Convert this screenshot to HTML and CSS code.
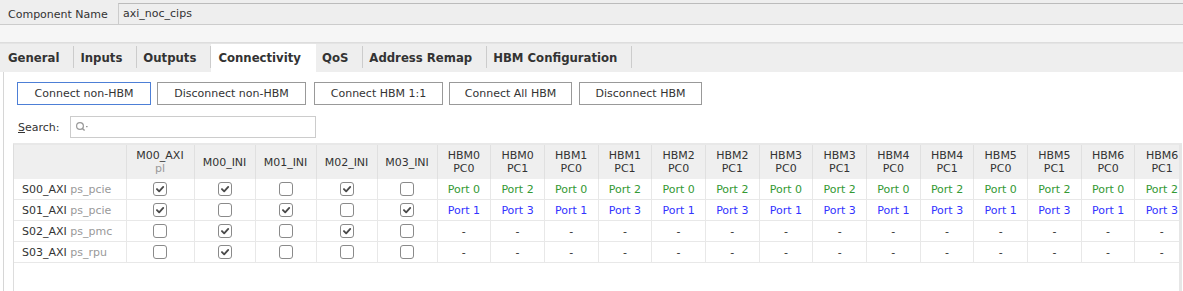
FILE: index.html
```html
<!DOCTYPE html>
<html lang="en">
  <head>
    <title>axi_noc_cips - Connectivity</title>
    <link rel="stylesheet" href="styles.css">
  </head>
  <body>
    <svg width="0" height="0" class="defs">
      <symbol id="tick" viewBox="0 0 13 13">
        <path d="M3.2 6.6 L5.6 9 L10 4.2" fill="none" stroke="#4a4a4a" stroke-width="2" stroke-linecap="round" stroke-linejoin="round"/>
      </symbol>
    </svg>

    <div class="name-bar">
      <label>Component Name</label>
      <div class="name-field">axi_noc_cips</div>
    </div>
    <div class="band"></div>

    <div class="tabs">
      <div class="tab">General</div>
      <div class="tab">Inputs</div>
      <div class="tab">Outputs</div>
      <div class="tab active">Connectivity</div>
      <div class="tab">QoS</div>
      <div class="tab">Address Remap</div>
      <div class="tab">HBM Configuration</div>
    </div>

    <div class="panel">
      <div class="actions">
        <button class="focused">Connect non-HBM</button>
        <button>Disconnect non-HBM</button>
        <button>Connect HBM 1:1</button>
        <button>Connect All HBM</button>
        <button>Disconnect HBM</button>
      </div>

      <div class="search">
        <span class="search-label"><u>S</u>earch:</span>
        <div class="search-field">
          <svg width="14" height="12" viewBox="0 0 14 12">
            <circle cx="5" cy="5" r="3.4" fill="none" stroke="#999" stroke-width="1.2"/>
            <path d="M7.4 7.4 L9.6 9.6" stroke="#999" stroke-width="1.4"/>
            <rect x="11" y="5" width="1.6" height="1.2" fill="#999"/>
          </svg>
        </div>
      </div>

      <div class="grid-wrap">
        <table class="grid">
          <colgroup>
            <col class="c-name"><col class="c-axi"><col class="c-ini"><col class="c-ini"><col class="c-ini"><col class="c-ini3">
            <col class="c-hbm"><col class="c-hbm"><col class="c-hbm"><col class="c-hbm"><col class="c-hbm"><col class="c-hbm"><col class="c-hbm">
            <col class="c-hbm"><col class="c-hbm"><col class="c-hbm"><col class="c-hbm"><col class="c-hbm"><col class="c-hbm"><col class="c-hbm">
          </colgroup>
          <thead>
            <tr>
              <th></th>
              <th>M00_AXI<br><span class="dim">pl</span></th>
              <th>M00_INI</th><th>M01_INI</th><th>M02_INI</th><th>M03_INI</th>
              <th>HBM0<br>PC0</th><th>HBM0<br>PC1</th><th>HBM1<br>PC0</th><th>HBM1<br>PC1</th>
              <th>HBM2<br>PC0</th><th>HBM2<br>PC1</th><th>HBM3<br>PC0</th><th>HBM3<br>PC1</th>
              <th>HBM4<br>PC0</th><th>HBM4<br>PC1</th><th>HBM5<br>PC0</th><th>HBM5<br>PC1</th>
              <th>HBM6<br>PC0</th><th>HBM6<br>PC1</th>
            </tr>
          </thead>
          <tbody>
            <tr>
              <td class="name">S00_AXI <span class="dim">ps_pcie</span></td>
              <td><span class="cb"><svg><use href="#tick"/></svg></span></td>
              <td><span class="cb"><svg><use href="#tick"/></svg></span></td>
              <td><span class="cb"></span></td>
              <td><span class="cb"><svg><use href="#tick"/></svg></span></td>
              <td><span class="cb"></span></td>
              <td class="p0">Port 0</td><td class="p0">Port 2</td><td class="p0">Port 0</td><td class="p0">Port 2</td>
              <td class="p0">Port 0</td><td class="p0">Port 2</td><td class="p0">Port 0</td><td class="p0">Port 2</td>
              <td class="p0">Port 0</td><td class="p0">Port 2</td><td class="p0">Port 0</td><td class="p0">Port 2</td>
              <td class="p0">Port 0</td><td class="p0">Port 2</td>
            </tr>
            <tr>
              <td class="name">S01_AXI <span class="dim">ps_pcie</span></td>
              <td><span class="cb"><svg><use href="#tick"/></svg></span></td>
              <td><span class="cb"></span></td>
              <td><span class="cb"><svg><use href="#tick"/></svg></span></td>
              <td><span class="cb"></span></td>
              <td><span class="cb"><svg><use href="#tick"/></svg></span></td>
              <td class="p1">Port 1</td><td class="p1">Port 3</td><td class="p1">Port 1</td><td class="p1">Port 3</td>
              <td class="p1">Port 1</td><td class="p1">Port 3</td><td class="p1">Port 1</td><td class="p1">Port 3</td>
              <td class="p1">Port 1</td><td class="p1">Port 3</td><td class="p1">Port 1</td><td class="p1">Port 3</td>
              <td class="p1">Port 1</td><td class="p1">Port 3</td>
            </tr>
            <tr>
              <td class="name">S02_AXI <span class="dim">ps_pmc</span></td>
              <td><span class="cb"></span></td>
              <td><span class="cb"><svg><use href="#tick"/></svg></span></td>
              <td><span class="cb"></span></td>
              <td><span class="cb"><svg><use href="#tick"/></svg></span></td>
              <td><span class="cb"></span></td>
              <td>-</td><td>-</td><td>-</td><td>-</td><td>-</td><td>-</td><td>-</td>
              <td>-</td><td>-</td><td>-</td><td>-</td><td>-</td><td>-</td><td>-</td>
            </tr>
            <tr>
              <td class="name">S03_AXI <span class="dim">ps_rpu</span></td>
              <td><span class="cb"></span></td>
              <td><span class="cb"><svg><use href="#tick"/></svg></span></td>
              <td><span class="cb"></span></td>
              <td><span class="cb"></span></td>
              <td><span class="cb"></span></td>
              <td>-</td><td>-</td><td>-</td><td>-</td><td>-</td><td>-</td><td>-</td>
              <td>-</td><td>-</td><td>-</td><td>-</td><td>-</td><td>-</td><td>-</td>
            </tr>
          </tbody>
        </table>
      </div>
    </div>
  </body>
</html>
```

FILE: styles.css
```css
body {
  margin: 0;
  font-family: "DejaVu Sans", sans-serif;
  font-size: 11px;
  color: #333;
  background: #fff;
  overflow: hidden;
}
.defs {
  position: absolute;
}
.name-bar {
  height: 21px;
  display: flex;
  background: #eee;
  padding: 3px 0 0 8px;
}
.name-bar label {
  width: 110px;
  line-height: 23px;
}
.name-field {
  flex-grow: 1;
  line-height: 20px;
  padding-left: 4px;
  border-top: 1px solid #bbb;
  border-left: 1px solid #ccc;
  background: #eee;
}
.band {
  height: 17px;
  background: #f6f6f6;
  border-top: 1px solid #ccc;
  border-bottom: 1px solid #ddd;
  box-shadow: 0 1px 1px #e4e4e4;
}
.tabs {
  display: flex;
  height: 28px;
  margin-top: 1px;
  background: #eee;
  padding-left: 1px;
}
.tab {
  display: flex;
  align-items: center;
  padding: 0 15px 0 6px;
  font-size: 11.7px;
  font-weight: bold;
  color: #333;
  position: relative;
}
.tab:first-child {
  padding-left: 7px;
}
.tab::after {
  content: "";
  position: absolute;
  right: 0;
  top: 2px;
  bottom: 4px;
  border-right: 1px solid #ccc;
}
.tab.active {
  background: #fff;
  padding: 0 15px 0 7px;
}
.tab.active::after {
  display: none;
}
.panel {
  margin-left: 3px;
  border-left: 1px solid #d6d6d6;
  height: 230px;
}
.actions {
  display: flex;
  padding: 10px 0 0 13px;
}
.actions button {
  height: 23px;
  padding: 0;
  margin-right: 7px;
  border: 1px solid #999;
  border-radius: 0;
  background: #fff;
  font-family: "DejaVu Sans", sans-serif;
  font-size: 11px;
  color: #333;
}
.actions button:nth-child(1) { width: 134px; margin-right: 6px; }
.actions button:nth-child(2) { width: 149px; margin-right: 8px; }
.actions button:nth-child(3) { width: 129px; margin-right: 6px; }
.actions button:nth-child(4) { width: 123px; }
.actions button:nth-child(5) { width: 123px; }
.actions button.focused {
  border-color: #4d7fd6;
}
.search {
  display: flex;
  align-items: center;
  padding: 11px 0 0 14px;
}
.search-label {
  width: 52px;
}
.search-field {
  width: 240px;
  height: 20px;
  border: 1px solid #ccc;
  display: flex;
  align-items: center;
  padding-left: 4px;
}
.grid-wrap {
  margin: 5px 0 0 9px;
  width: 1165px;
  height: 160px;
  overflow: hidden;
  border-top: 2px solid #e8e8e8;
  border-left: 1px solid #ddd;
  border-right: 3px solid #e6e6e6;
}
.grid {
  table-layout: fixed;
  border-collapse: collapse;
  width: 1175px;
}
.c-name { width: 112px; }
.c-axi { width: 68px; }
.c-ini { width: 61px; }
.c-ini3 { width: 60px; }
.c-hbm { width: 53.7px; }
.grid th {
  height: 34px;
  padding: 0;
  background: #efefef;
  font-weight: normal;
  line-height: 13px;
  border-left: 1px solid #e0e0e0;
  white-space: nowrap;
  overflow: hidden;
}
.grid th:first-child {
  border-left: none;
}
.grid td {
  height: 20px;
  padding: 0;
  text-align: center;
  white-space: nowrap;
  overflow: hidden;
  border: 1px solid #e8e8e8;
  border-top: none;
}
.grid td:first-child {
  border-left: none;
}
.grid td.name {
  text-align: left;
  padding-left: 8px;
}
.dim {
  color: #999;
}
.p0 {
  color: #339933;
}
.p1 {
  color: #3333ff;
}
.cb {
  display: inline-block;
  width: 12px;
  height: 12px;
  border: 1px solid #8a8a8a;
  border-radius: 3px;
  vertical-align: middle;
  background: #fff;
}
.cb svg {
  display: block;
  width: 12px;
  height: 12px;
}
```
